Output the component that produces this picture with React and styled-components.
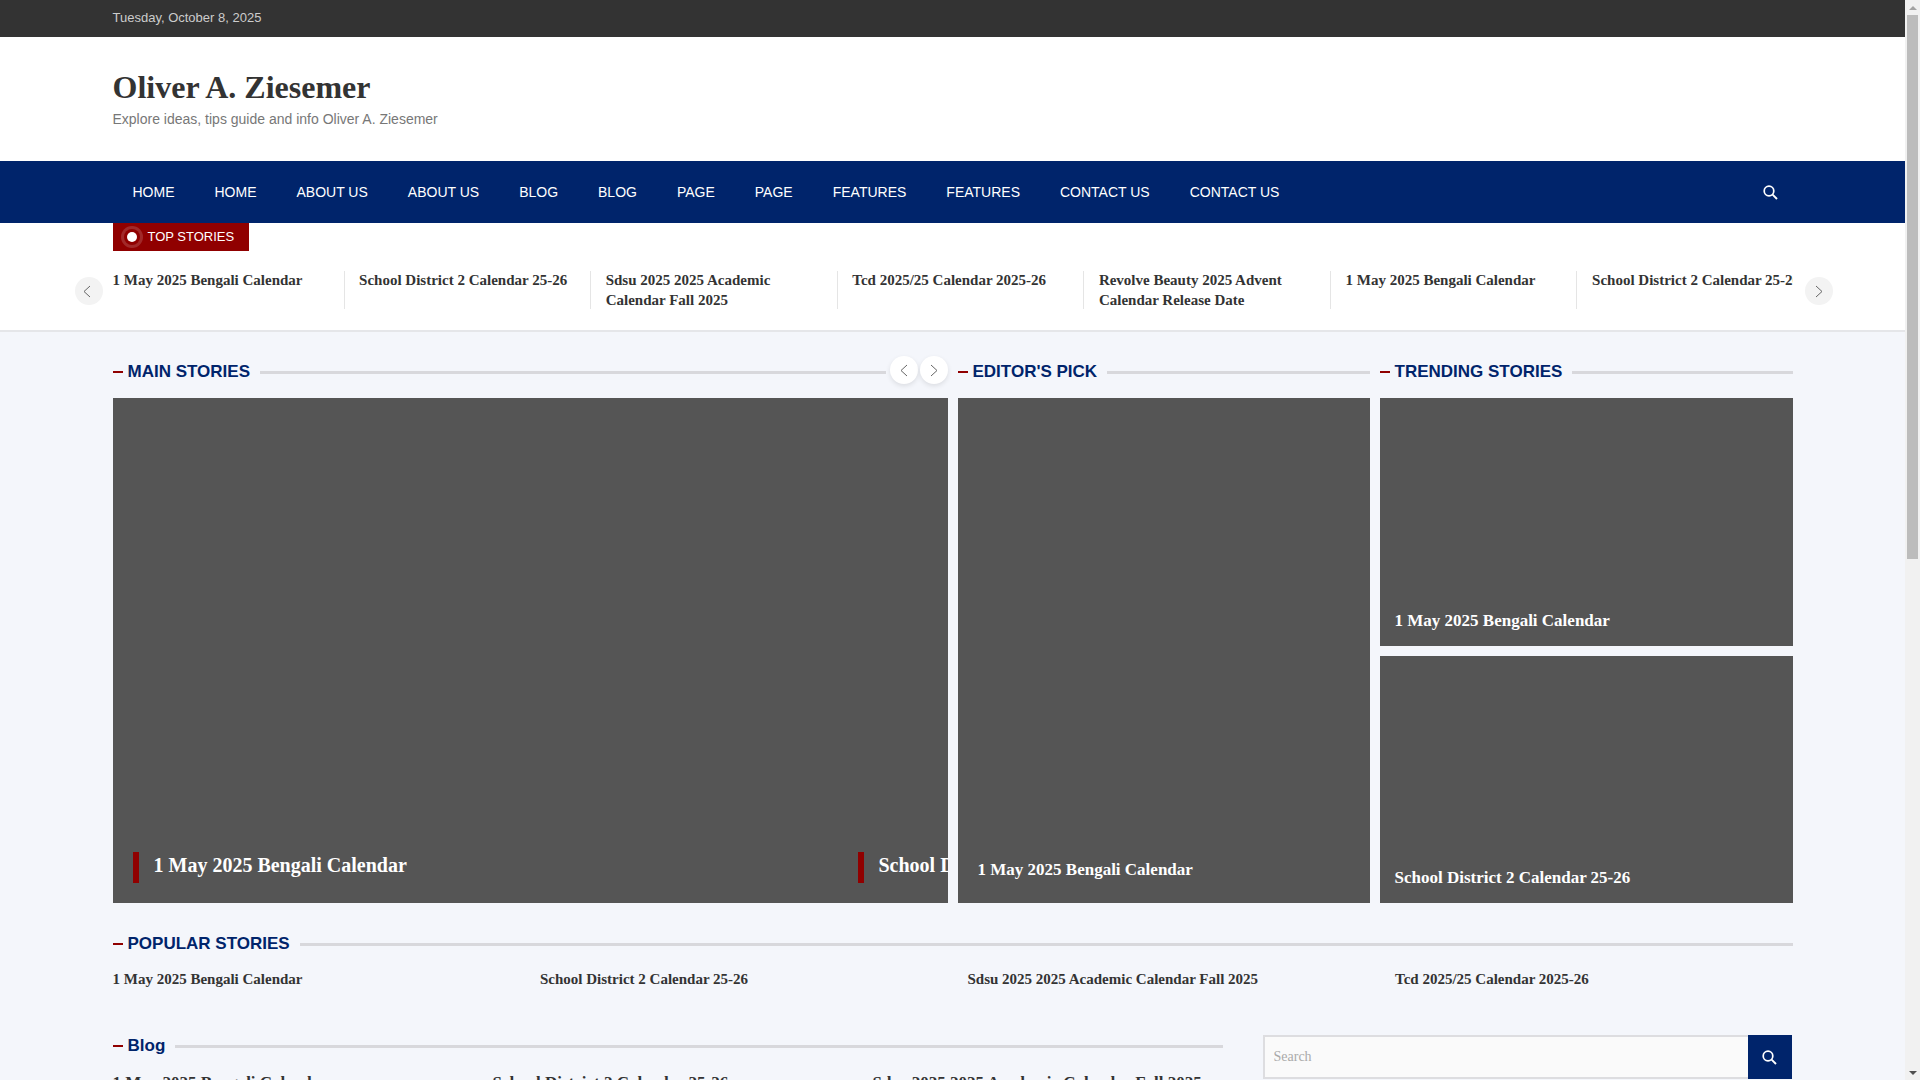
import React from 'react';
import styled, { createGlobalStyle } from 'styled-components';

const serif = '"Liberation Serif", "Times New Roman", serif';
const sans = '"Liberation Sans", Arial, sans-serif';
const navy = '#00246b';
const red = '#900000';

const TITLES = [
	'1 May 2025 Bengali Calendar',
	'School District 2 Calendar 25-26',
	'Sdsu 2025 2025 Academic Calendar Fall 2025',
	'Tcd 2025/25 Calendar 2025-26',
	'Revolve Beauty 2025 Advent Calendar Release Date',
];

const NAV = ['Home', 'Home', 'About Us', 'About Us', 'Blog', 'Blog', 'Page', 'Page', 'Features', 'Features', 'Contact Us', 'Contact Us'];

const GlobalStyle = createGlobalStyle`
	body {
		margin: 0;
		background: #f4f6fb;
		font-family: ${sans};
		color: #333;
		overflow-x: hidden;
	}
	* {
		box-sizing: border-box;
	}
`;

const Page = styled.div`
	width: 1905px;
`;

// the window's scrollbar, as the screenshot shows it
const ScrollStrip = styled.div`
	position: fixed;
	top: 0;
	right: 0;
	bottom: 0;
	display: flex;
	flex-direction: column;
	align-items: center;
	width: 15px;
	background: #f1f1f1;
`;

const ScrollThumb = styled.div`
	width: 11px;
	height: 544px;
	margin-top: 5px;
	background: #bcbcbc;
`;

const ScrollArrow = styled.span`
	width: 0;
	height: 0;
	border-left: 4px solid transparent;
	border-right: 4px solid transparent;
	${(p) =>
		p.$up
			? 'margin-top: 6px; border-bottom: 4px solid #a3a3a3;'
			: 'margin-top: auto; margin-bottom: 5px; border-top: 4px solid #505050;'}
`;

const Container = styled.div`
	width: 1680px;
	margin: 0 auto;
`;

const TopBar = styled.div`
	height: 37px;
	background: #333;
	color: #ccc;
	font-size: 13px;
	line-height: 35px;
`;

const Masthead = styled.header`
	height: 124px;
	padding-top: 30px;
	background: #fff;
`;

const SiteTitle = styled.h1`
	margin: 0 0 2px;
	font: bold 32px/40px ${serif};
	color: #333;
`;

const Tagline = styled.p`
	margin: 0;
	font-size: 14px;
	line-height: 20px;
	color: #777;
`;

const NavBar = styled.nav`
	height: 62px;
	background: ${navy};
`;

const NavInner = styled(Container)`
	display: flex;
	align-items: center;
	height: 100%;
`;

const NavLink = styled.a`
	padding: 0 20px;
	font-size: 14px;
	text-transform: uppercase;
	color: #fff;
`;

const NavSearch = styled.span`
	display: flex;
	margin-left: auto;
	margin-right: 15px;
`;

const SearchIcon = () => (
	<svg width="15" height="15" viewBox="0 0 15 15" fill="none" stroke="#fff">
		<circle cx="6" cy="6" r="4.8" strokeWidth="1.7" />
		<line x1="9.6" y1="9.6" x2="14" y2="14" strokeWidth="1.9" />
	</svg>
);

const TickerBand = styled.section`
	height: 109px;
	background: #fff;
	border-bottom: 2px solid #e5e6e9;
`;

const TopBadge = styled.div`
	display: flex;
	align-items: center;
	width: 136px;
	height: 28px;
	padding: 0 0 1px 14px;
	background: ${red};
	color: #fff;
	font-size: 13px;
`;

const PulseDot = styled.span`
	width: 10px;
	height: 10px;
	margin-right: 11px;
	border-radius: 50%;
	background: #fff;
	box-shadow: 0 0 0 3px ${red}, 0 0 0 6px rgba(255, 255, 255, 0.16);
`;

const TickerWrap = styled.div`
	position: relative;
	margin-top: 20px;
`;

const TickerTrack = styled.div`
	display: flex;
	overflow: hidden;
`;

const TickerItem = styled.a`
	flex: 0 0 232px;
	height: 39px;
	margin-right: 14.6px;
	padding-right: 15px;
	border-right: 1px solid #e5e5e5;
	font: bold 15px/20px ${serif};
	color: #333;
	transform: translateY(-1px);
`;

const RoundButton = styled.span`
	display: flex;
	align-items: center;
	justify-content: center;
	flex: none;
	width: 28px;
	height: 28px;
	border-radius: 50%;
	background: ${(p) => (p.$raised ? '#fff' : '#f3f3f3')};
	box-shadow: ${(p) => (p.$raised ? '0 2px 5px rgba(0, 0, 0, 0.1)' : 'none')};
`;

const TickerArrow = styled(RoundButton)`
	position: absolute;
	top: 6px;
	${(p) => (p.$side === 'left' ? 'left: -38px; padding-right: 3px;' : 'right: -40px;')}
`;

const Chevron = ({ left }) => (
	<svg width="8" height="13" viewBox="0 0 8 13" fill="none" stroke="#666" strokeWidth="1">
		<polyline points={left ? '7,1 1,6.5 7,12' : '1,1 7,6.5 1,12'} />
	</svg>
);

const Main = styled(Container)`
	padding: 27px 0 120px;
`;

const TopGrid = styled.div`
	display: grid;
	grid-template-columns: 835px 412px 413px;
	column-gap: 10px;
`;

const Column = styled.div`
	min-width: 0;
`;

const Heading = styled.div`
	display: flex;
	align-items: center;
	height: 26px;
	margin-bottom: ${(p) => p.$mb || 13}px;
	margin-top: ${(p) => p.$mt || 0}px;
	font: bold 17px/26px ${sans};
	color: ${navy};

	&::before {
		content: '';
		flex: none;
		width: 10px;
		height: 2px;
		margin-right: 5px;
		background: ${red};
	}
`;

const HeadingRule = styled.span`
	flex: 1;
	height: 3px;
	margin: 1px 0 0 10px;
	background: #d8d8dc;
`;

const HeadingArrows = styled.span`
	display: flex;
	gap: 2px;
	margin: 0 0 4px 4px;
`;

const SlideViewport = styled.div`
	display: flex;
	height: 505px;
	overflow: hidden;
	background: #555;
`;

const Slide = styled.div`
	display: flex;
	flex: 0 0 725px;
	flex-direction: column;
	justify-content: flex-end;
	padding: 0 20px 20px;
`;

const SlideCaption = styled.a`
	height: 31px;
	padding-left: 15px;
	border-left: 6px solid ${red};
	font: bold 20px/27px ${serif};
	white-space: nowrap;
	color: #fff;
`;

const Card = styled.div`
	display: flex;
	flex-direction: column;
	justify-content: flex-end;
	height: ${(p) => p.$height}px;
	padding: ${(p) => p.$pad};
	background: #555;
	font: bold 17px/24px ${serif};
	color: #fff;
`;

const CardStack = styled.div`
	display: flex;
	flex-direction: column;
	gap: 10px;
`;

const StoryRow = styled.div`
	display: grid;
	grid-template-columns: repeat(${(p) => p.$cols}, 1fr);
	column-gap: 30px;
	font: bold ${(p) => p.$size}px/${(p) => p.$line}px ${serif};
	color: #333;
`;

const LowerGrid = styled.div`
	display: grid;
	grid-template-columns: 1110px 530px;
	column-gap: 40px;
	margin-top: 44px;
`;

const SearchForm = styled.form`
	display: flex;
	height: 44px;
	margin-top: 2px;
`;

const SearchInput = styled.input`
	flex: 1;
	min-width: 0;
	padding: 0 9px;
	border: 2px solid #dddde0;
	border-right: 0;
	background: #fafafa;
	font: 14px ${serif};
	&::placeholder {
		color: #aaa;
	}
`;

const SearchButton = styled.button`
	display: flex;
	align-items: center;
	justify-content: center;
	width: 44px;
	border: 0;
	margin-right: 1px;
	background: ${navy};
`;

export default function App() {
	const ticker = [...TITLES, TITLES[0], TITLES[1]];
	return (
		<Page>
			<GlobalStyle />
			<TopBar>
				<Container>Tuesday, October 8, 2025</Container>
			</TopBar>
			<Masthead>
				<Container>
					<SiteTitle>Oliver A. Ziesemer</SiteTitle>
					<Tagline>Explore ideas, tips guide and info Oliver A. Ziesemer</Tagline>
				</Container>
			</Masthead>
			<NavBar>
				<NavInner>
					{NAV.map((item, i) => (
						<NavLink key={i}>{item}</NavLink>
					))}
					<NavSearch>
						<SearchIcon />
					</NavSearch>
				</NavInner>
			</NavBar>
			<TickerBand>
				<Container>
					<TopBadge>
						<PulseDot />
						TOP STORIES
					</TopBadge>
					<TickerWrap>
						<TickerTrack>
							{ticker.map((title, i) => (
								<TickerItem key={i}>{title}</TickerItem>
							))}
						</TickerTrack>
						<TickerArrow $side="left">
							<Chevron left />
						</TickerArrow>
						<TickerArrow $side="right">
							<Chevron />
						</TickerArrow>
					</TickerWrap>
				</Container>
			</TickerBand>
			<Main>
				<TopGrid>
					<Column>
						<Heading>
							MAIN STORIES
							<HeadingRule />
							<HeadingArrows>
								<RoundButton $raised>
									<Chevron left />
								</RoundButton>
								<RoundButton $raised>
									<Chevron />
								</RoundButton>
							</HeadingArrows>
						</Heading>
						<SlideViewport>
							<Slide>
								<SlideCaption>{TITLES[0]}</SlideCaption>
							</Slide>
							<Slide>
								<SlideCaption>{TITLES[1]}</SlideCaption>
							</Slide>
						</SlideViewport>
					</Column>
					<Column>
						<Heading>
							EDITOR'S PICK
							<HeadingRule />
						</Heading>
						<Card $height={505} $pad="0 20px 21px">
							{TITLES[0]}
						</Card>
					</Column>
					<Column>
						<Heading>
							TRENDING STORIES
							<HeadingRule />
						</Heading>
						<CardStack>
							<Card $height={248} $pad="0 15px 13px">
								{TITLES[0]}
							</Card>
							<Card $height={247} $pad="0 15px 13px">
								{TITLES[1]}
							</Card>
						</CardStack>
					</Column>
				</TopGrid>
				<Heading $mt={28} $mb={12}>
					POPULAR STORIES
					<HeadingRule />
				</Heading>
				<StoryRow $cols={4} $size={15} $line={20}>
					{TITLES.slice(0, 4).map((title) => (
						<a key={title}>{title}</a>
					))}
				</StoryRow>
				<LowerGrid>
					<Column>
						<Heading $mb={12}>
							Blog
							<HeadingRule />
						</Heading>
						<StoryRow $cols={3} $size={17} $line={24}>
							{TITLES.slice(0, 3).map((title) => (
								<a key={title}>{title}</a>
							))}
						</StoryRow>
					</Column>
					<SearchForm onSubmit={(e) => e.preventDefault()}>
						<SearchInput placeholder="Search" />
						<SearchButton type="submit" aria-label="Search">
							<SearchIcon />
						</SearchButton>
					</SearchForm>
				</LowerGrid>
			</Main>
			<ScrollStrip>
				<ScrollArrow $up />
				<ScrollThumb />
				<ScrollArrow />
			</ScrollStrip>
		</Page>
	);
}
